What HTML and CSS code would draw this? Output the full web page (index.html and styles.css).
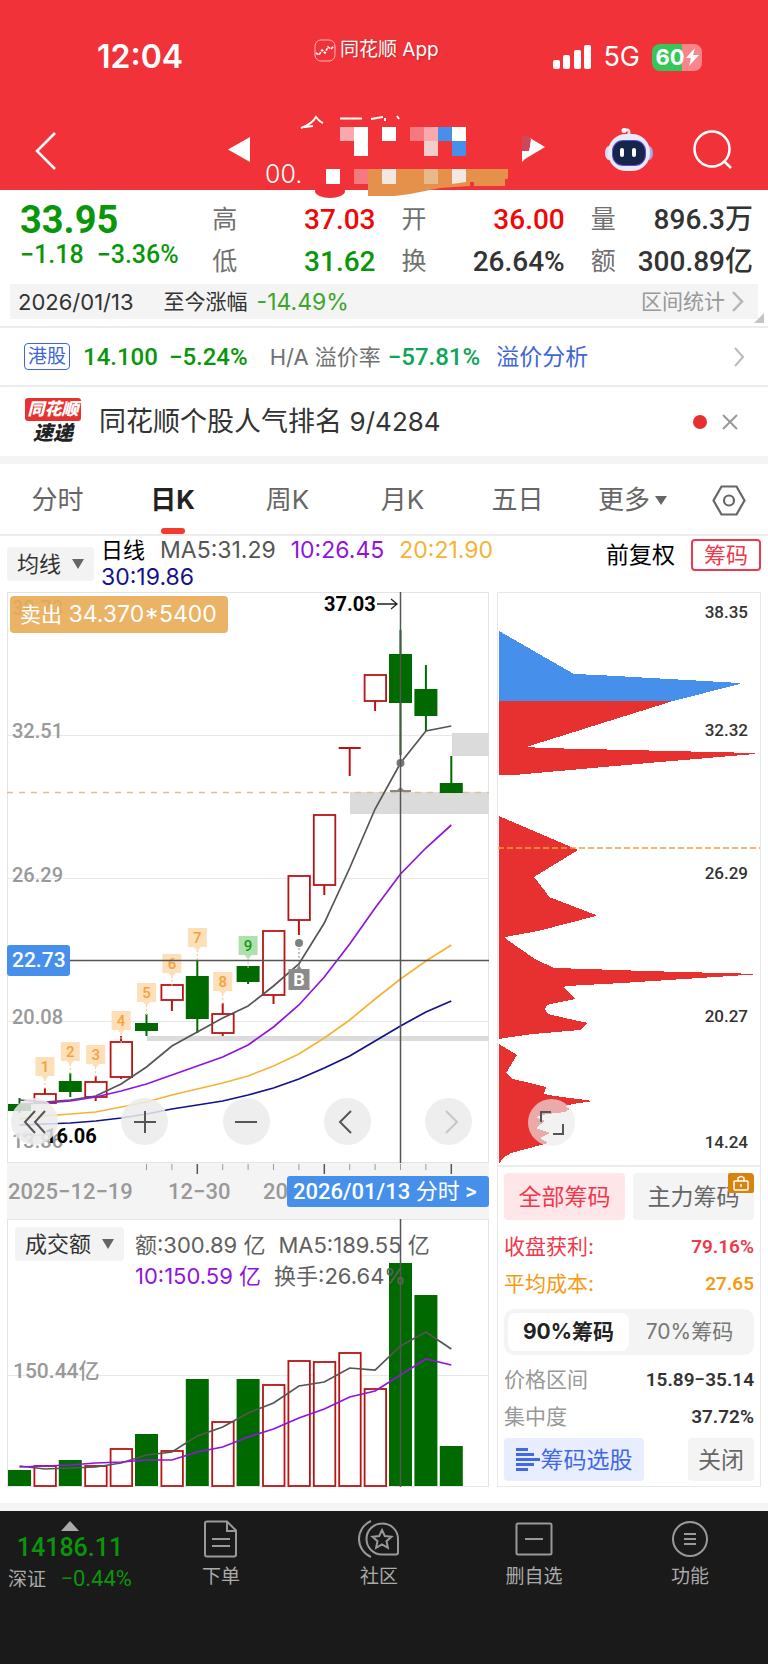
FILE: index.html
```html
<!DOCTYPE html>
<html lang="zh-CN">
<head>
<meta charset="utf-8">
<meta name="viewport" content="width=device-width, initial-scale=1">
<title>同花顺 日K</title>
<link rel="stylesheet" href="styles.css">
</head>
<body>
<header class="top">
  <div class="status">
    <span class="clock">12:04</span>
    <span class="app">
      <svg width="22" height="23" viewBox="0 0 22 23" fill="none" stroke="#fff"><rect x="1" y="1" width="20" height="21" rx="6" stroke="#ffb3b5"/><path d="M2 14l3 2 3-5 3 3 3-6 3 2 3-3" stroke-width="1.6" stroke-dasharray="3 1"/></svg>
      <span>同花顺 App</span>
    </span>
    <span class="signals">
      <svg width="38" height="25" viewBox="0 0 38 25" fill="#fff"><rect y="15" width="7" height="9" rx="2"/><rect x="10" y="10" width="7" height="14" rx="2"/><rect x="21" y="5" width="7" height="19" rx="2"/><rect x="31" width="7" height="24" rx="2"/></svg>
      <span class="net">5G</span>
      <span class="battery">60<svg width="13" height="18" viewBox="0 0 13 18" fill="#fff"><path d="M9 0L0 10h5L3 18l10-11H7z"/></svg></span>
    </span>
  </div>
  <nav class="title-bar">
    <button class="icon-btn" aria-label="返回"><svg width="22" height="40" viewBox="0 0 22 40" fill="none" stroke="#fff" stroke-width="2.5"><path d="M20 2L2 20l18 18"/></svg></button>
    <div class="stock">
      <button class="icon-btn" aria-label="上一只"><svg width="22" height="25" viewBox="0 0 22 25" fill="#fff"><path d="M22 0v25L0 12.500z"/></svg></button>
      <span class="code">00.</span>
      <svg class="mosaic" viewBox="286 106 236 88">
        <g fill="none" stroke="#fff" stroke-width="2"><path d="M301 122q11-4 15-11q4 5 7 6M305 121l8-1M340 112.500h22M371 113l12-2M385 112v3M397 110l2 3"/></g>
        <path fill="#e6914b" d="M368 163h140v10h-3v7h-31v-4h-4v4l-30 2-30 6-15 2h-27z"/>
        <ellipse cx="330" cy="185" rx="15" ry="7" fill="#f03038"/>
        <g fill="#fff"><path d="M354 121h14v29h-14zM382 121h14v14h-14zM452 121h14v14h-14zM326 163h14v15h-14z"/></g>
        <path fill="#f9a8ae" d="M340 121h14v14h-14zM424 121h14v14h-14z"/>
        <path fill="#f57a80" d="M410 121h14v14h-14zM354 163h14v15h-14z"/>
        <path fill="#4690ec" d="M438 121h14v14h-14zM452 135h14v15h-14z"/>
        <path fill="#f5cccc" d="M424 135h14v15h-14z"/>
        <path fill="#f3e8e0" d="M382 163h14v15h-14zM452 163h14v13l-14 2z"/>
        <path fill="#e8b98a" d="M424 163h14v15h-14z"/>
      </svg>
      <button class="icon-btn" aria-label="下一只"><svg width="23" height="26" viewBox="0 0 23 26"><path d="M0 14l8-3V2l15 9L3 23l-3 3z" fill="#fff"/><path d="M0 0h6l3 3-2 12H0z" fill="#cf4658"/></svg></button>
    </div>
    <div class="tools">
      <button class="icon-btn" aria-label="智能助手"><svg width="48" height="44" viewBox="0 0 48 44"><path d="M24 8V4q0-3-4-2" fill="none" stroke="#dfe0f6" stroke-width="3"/><circle cx="19" cy="2.500" r="2.500" fill="#fff"/><ellipse cx="4" cy="25" rx="4" ry="7" fill="#dcdcf2"/><ellipse cx="44" cy="25" rx="4" ry="7" fill="#a9a6ee"/><rect x="3" y="6" width="42" height="37" rx="18" fill="#e9e9fa"/><rect x="7" y="12" width="34" height="26" rx="11" fill="#5b4bd0"/><rect x="8" y="13" width="32" height="24" rx="10" fill="#16264a"/><rect x="15" y="20" width="4" height="9" rx="2" fill="#fff"/><rect x="27" y="20" width="4" height="9" rx="2" fill="#fff"/></svg></button>
      <button class="icon-btn" aria-label="搜索"><svg width="40" height="40" viewBox="0 0 40 40" fill="none" stroke="#fff" stroke-width="2.500"><circle cx="19" cy="19" r="17.500"/><path d="M31 31l7 7"/></svg></button>
    </div>
  </nav>
</header>

<main>
  <section class="quote num">
    <div class="last"><strong>33.95</strong><span>−1.18</span><span>−3.36%</span></div>
    <dl><div><dt>高</dt><dd class="up">37.03</dd></div><div><dt>低</dt><dd class="down">31.62</dd></div></dl>
    <dl><div><dt>开</dt><dd class="up">36.00</dd></div><div><dt>换</dt><dd>26.64%</dd></div></dl>
    <dl><div><dt>量</dt><dd>896.3万</dd></div><div><dt>额</dt><dd>300.89亿</dd></div></dl>
  </section>

  <section class="range-wrap">
    <div class="range">
      <span class="date">2026/01/13</span><span>至今涨幅</span><span class="pct">-14.49%</span>
      <a class="stat" href="#">区间统计<svg width="12" height="21" viewBox="0 0 12 21" fill="none" stroke="#b5b5b5" stroke-width="2.500"><path d="M1 1l9 9.500L1 20"/></svg></a>
    </div>
    <svg class="corner" width="10" height="10" viewBox="0 0 10 10"><path d="M10 0v10H0z" fill="#c4c4c4"/></svg>
  </section>

  <section class="hk">
    <span class="hk-badge">港股</span>
    <b class="num hk-price">14.100</b><b class="num hk-pct">−5.24%</b>
    <span class="ha">H/A 溢价率</span><b class="num ha-pct">−57.81%</b>
    <a href="#" class="analysis">溢价分析</a>
    <svg width="10" height="20" viewBox="0 0 10 20" fill="none" stroke="#bbb" stroke-width="2"><path d="M1 1l8 9-8 9"/></svg>
  </section>

  <section class="news">
    <div class="express"><span class="express-top">同花顺</span><span class="express-bottom">速递</span></div>
    <p>同花顺个股人气排名 <span class="rank">9/4284</span></p>
    <i class="dot"></i>
    <button class="icon-btn" aria-label="关闭提示"><svg width="16" height="16" viewBox="0 0 16 16" stroke="#999" stroke-width="2"><path d="M1 1l14 14M15 1L1 15"/></svg></button>
  </section>

  <nav class="tabs">
    <button>分时</button><button class="active">日K</button><button>周K</button><button>月K</button><button>五日</button>
    <button>更多<svg width="12" height="9" viewBox="0 0 12 9" fill="#666"><path d="M0 0h12L6 9z"/></svg></button>
    <button aria-label="设置"><svg width="34" height="31" viewBox="0 0 34 31" fill="none" stroke="#666" stroke-width="2.200"><path d="M9.500 1.500h15l8 14-8 14h-15l-8-14z"/><circle cx="17" cy="15.500" r="5"/></svg></button>
  </nav>

  <section class="ma-row">
    <label class="picker"><select aria-label="指标"><option>均线</option></select><svg width="12" height="10" viewBox="0 0 12 10" fill="#666"><path d="M0 0h12L6 10z"/></svg></label>
    <div class="legend"><span class="black">日线</span><span>MA5:31.29</span><span class="purple">10:26.45</span><span class="gold">20:21.90</span><span class="navy">30:19.86</span></div>
    <button class="adjust">前复权</button>
    <button class="chip-toggle">筹码</button>
  </section>

  <section class="board">
    <div class="left">
      <div class="kchart">
        <svg id="k" class="plot" viewBox="7 592 482 571"></svg>
        <div class="zoom-bar">
          <button class="round first" aria-label="快退"><svg width="24" height="24" viewBox="0 0 24 24"><path d="M12 1L2 12l10 11M22 1L12 12l10 11"/></svg></button>
          <button class="round" aria-label="放大"><svg width="24" height="24" viewBox="0 0 24 24"><path d="M1 12h22M12 1v22"/></svg></button>
          <button class="round" aria-label="缩小"><svg width="24" height="24" viewBox="0 0 24 24"><path d="M1 12h22"/></svg></button>
          <button class="round" aria-label="前移"><svg width="24" height="24" viewBox="0 0 24 24"><path d="M16 1L5 12l11 11"/></svg></button>
          <button class="round off" aria-label="后移" disabled><svg width="24" height="24" viewBox="0 0 24 24"><path d="M9 1l11 11L9 23"/></svg></button>
        </div>
      </div>
      <svg id="axis" class="plot axis" viewBox="7 1163 482 56"></svg>
      <div class="volume">
        <svg id="v" class="plot" viewBox="7 1219 482 268"></svg>
        <div class="vol-head">
          <label class="picker"><select aria-label="副图指标"><option>成交额</option></select><svg width="12" height="10" viewBox="0 0 12 10" fill="#666"><path d="M0 0h12L6 10z"/></svg></label>
          <div class="vol-legend"><div><span>额:300.89 亿</span><span>MA5:189.55 亿</span></div><div><span class="purple">10:150.59 亿</span><span>换手:26.64%</span></div></div>
        </div>
      </div>
    </div>

    <aside class="chips">
      <div class="profile">
        <svg class="plot" viewBox="498 592 262 572">
          <g shape-rendering="crispEdges">
            <path fill="#4690ec" d="M499 630L574 673L598 674L740 682L740 683L673 700H499z"/>
            <g fill="#e73131">
              <path d="M499 700H673L526 746L543 747L755 752V753L660 761L514 774H499z"/>
              <path d="M499 815L578 849L534 876L545 890L549 896L596 914V915L538 930L505 936L506 938L535 958L554 967L588 968L645 970L760 973L715 976L622 982L567 985L563 986L576 998L560 1001L547 1004L545 1008L548 1013L565 1017L588 1022L580 1029L533 1033L504 1037L499 1038z"/>
              <path d="M499 1043L517 1054L506 1072L513 1078L530 1082L546 1086L544 1093L555 1095L593 1100L573 1103L565 1105L570 1108L565 1111L547 1113L536 1116L545 1120L536 1127L550 1132L540 1137L548 1142L530 1147L511 1152L503 1157L499 1163z"/>
            </g>
          </g>
          <path d="M498 847H760" stroke="#f0a235" stroke-width="1.500" stroke-dasharray="6 3"/>
          <g class="svg-num chip-label" text-anchor="end"><text x="748" y="617">38.35</text><text x="748" y="735">32.32</text><text x="748" y="878">26.29</text><text x="748" y="1021">20.27</text><text x="748" y="1147">14.24</text></g>
        </svg>
        <button class="round expand" aria-label="展开"><svg width="24" height="24" viewBox="0 0 24 24"><path d="M1 11V1h10M23 13v10H13"/></svg></button>
      </div>
      <div class="chip-info">
        <div class="chip-tabs"><button class="on">全部筹码</button><button>主力筹码<span class="lock"><svg width="16" height="16" viewBox="0 0 16 16" fill="none" stroke="#fff" stroke-width="1.500"><rect x="1" y="6" width="14" height="9" rx="1"/><path d="M5 6V3q3-3 6 0v3M8 9v3"/></svg></span></button></div>
        <p class="fact red"><span>收盘获利:</span><b class="num">79.16%</b></p>
        <p class="fact orange"><span>平均成本:</span><b class="num">27.65</b></p>
        <div class="segment"><button class="on">90%筹码</button><button>70%筹码</button></div>
        <p class="fact"><span>价格区间</span><b class="num">15.89−35.14</b></p>
        <p class="fact"><span>集中度</span><b class="num">37.72%</b></p>
        <div class="chip-actions"><button class="pick"><svg width="24" height="24" viewBox="0 0 24 24" fill="#4068e8"><path d="M0 0h12v3H0zM0 5h18v3H0zM0 10h24v3H0zM0 15h18v3H0zM0 20h12v3H0z"/></svg>筹码选股</button><button>关闭</button></div>
      </div>
    </aside>
  </section>
</main>

<nav class="bottom">
  <a class="index" href="#"><svg width="18" height="10" viewBox="0 0 18 10" fill="#aaa"><path d="M9 0l9 10H0z"/></svg><b class="num">14186.11</b><span class="sz">深证 <em class="num">−0.44%</em></span></a>
  <a href="#"><svg width="36" height="38" viewBox="0 0 36 38"><path d="M4 1.500h20l9 9v24q0 2-2 2H4q-2 0-2-2V3.500q0-2 2-2zM24 2v9h9M9 19h18M9 26h18"/></svg>下单</a>
  <a href="#"><svg width="42" height="38" viewBox="0 0 42 38"><path d="M24 3.500a15.500 15.500 0 0 0 0 31h14q2 0 2-2V19a15.500 15.500 0 0 0-16-15.500zM13 1a19.500 19.500 0 0 0 0 36M24 10l2.800 6 6.700.7-5 4.500 1.400 6.600-5.900-3.400-5.900 3.400 1.400-6.600-5-4.500 6.700-.7z"/></svg>社区</a>
  <a href="#"><svg width="38" height="38" viewBox="0 0 38 38"><path d="M3 3.500h32q1.500 0 1.500 1.500v28q0 1.500-1.500 1.500H3q-1.500 0-1.500-1.500V5q0-1.500 1.500-1.500zM10 19h18"/></svg>删自选</a>
  <a href="#"><svg width="38" height="38" viewBox="0 0 38 38"><circle cx="19" cy="19" r="17"/><path d="M13 14h12M13 19h12M13 24h12"/></svg>功能</a>
</nav>
<script src="chart.js"></script>
</body>
</html>
```
FILE: styles.css
```css
* { box-sizing: border-box; }
body {
  margin: 0;
  min-height: 100vh;
  display: flex;
  flex-direction: column;
  background: #fff;
  color: #333;
  font-family: Inter, "Noto Sans CJK SC", sans-serif;
  font-size: 22px;
  line-height: 28px;
}
button, select { font: inherit; color: inherit; border: 0; background: none; padding: 0; margin: 0; }
a { color: inherit; text-decoration: none; }
p, dl, dd { margin: 0; }
svg { display: block; flex: none; }
.num, .svg-num { font-family: Roboto, "Noto Sans CJK SC", sans-serif; }
.icon-btn { display: flex; }
.up { color: #f00808; }
.down { color: #0a960a; }
.purple { color: #9014e0; }
.gold { color: #f5b335; }
.navy { color: #12128c; }
.black { color: #000; }

.top { background: #f13238; color: #fff; height: 190px; }
.status { height: 106px; padding: 8px 66px 0 97px; display: grid; grid-template-columns: 217px auto 1fr; align-items: center; }
.clock { font-size: 32px; font-weight: 600; }
.app { display: flex; gap: 4px; font-size: 19px; padding-bottom: 14px; white-space: nowrap; align-items: center; text-shadow: 1px 1px 2px #a3222688; }
.signals { display: flex; justify-content: flex-end; align-items: center; gap: 12px; }
.net { font-size: 27px; }
.battery { display: flex; align-items: center; justify-content: center; gap: 1px; width: 50px; height: 27px; border-radius: 8px; background: linear-gradient(90deg, #35c759 60%, #f7868a 60%); font-weight: 700; font-size: 22px; }
.title-bar { height: 84px; padding: 0 35px 4px; display: grid; grid-template-columns: 193px 1fr auto; align-items: center; }
.title-bar > .icon-btn { padding-bottom: 8px; }
.stock { display: flex; align-items: center; padding-bottom: 4px; }
.stock .icon-btn { padding-bottom: 8px; }
.code { font-size: 25px; font-weight: 300; width: 36px; margin: 42px 0 0 15px; white-space: nowrap; }
.mosaic { width: 236px; height: 88px; margin: 6px 0 0 -15px; }
.tools { display: flex; gap: 40px; align-items: center; padding-bottom: 10px; }

.quote { display: grid; grid-template-columns: 166fr 163fr 163fr 162fr; column-gap: 26px; padding: 9px 15px 0 20px; height: 94px; font-weight: 500; }
.last { color: #0a960a; font-size: 25px; white-space: nowrap; }
.last strong { display: block; font-size: 38px; line-height: 42px; font-weight: 700; }
.last span + span { margin-left: 13px; }
.quote dl div { display: flex; justify-content: space-between; line-height: 42px; white-space: nowrap; }
.quote dt { color: #707070; font-size: 25px; font-weight: 400; }
.quote dd { font-size: 28px; }

.range-wrap { padding: 0 10px; height: 44px; border-bottom: 2px solid #ececec; position: relative; }
.range { display: flex; align-items: center; height: 35px; padding: 0 14px 0 8px; background: #f4f4f4; font-size: 21px; }
.date { margin-right: 30px; font-size: 22px; }
.pct { color: #3da52b; margin-left: 9px; font-size: 23px; }
.stat { margin-left: auto; display: flex; align-items: center; gap: 7px; color: #999; }
.corner { position: absolute; right: 4px; bottom: 3px; }

.hk { display: flex; align-items: center; height: 59px; padding: 0 24px; border-bottom: 2px solid #ececec; font-size: 23px; white-space: nowrap; }
.hk-badge { border: 1px solid #3f66d8; border-radius: 4px; color: #3f66d8; font-size: 19px; line-height: 25px; padding: 0 3px; }
.hk b { font-weight: 500; font-size: 24px; }
.hk-price { color: #0a960a; margin-left: 13px; }
.hk-pct { color: #0a960a; margin-left: 11px; }
.ha { margin-left: 22px; color: #707070; font-size: 22px; }
.ha-pct { color: #0ea558; margin-left: 7px; }
.analysis { color: #3f66d8; margin: 0 auto 0 16px; }

.news { display: flex; align-items: center; height: 77px; padding: 0 30px 0 24px; border-bottom: 8px solid #f4f4f4; }
.express { width: 58px; display: flex; flex-direction: column; align-items: center; font-weight: 900; font-style: italic; }
.express-top { background: #e73131; color: #fff; font-size: 17px; line-height: 23px; width: 56px; text-align: center; border-radius: 3px; }
.express-bottom { font-size: 20px; line-height: 24px; color: #222; }
.news p { font-size: 27px; margin: 0 auto 0 17px; white-space: nowrap; }
.rank { font-size: 26px; }
.dot { width: 14px; height: 14px; border-radius: 50%; background: #e73131; margin-right: 15px; }

.tabs { display: grid; grid-template-columns: repeat(6, 115fr) 78fr; height: 72px; border-bottom: 2px solid #ececec; color: #666; font-size: 26px; }
.tabs button { display: flex; align-items: center; justify-content: center; gap: 5px; position: relative; white-space: nowrap; padding-top: 2px; }
.tabs .active { color: #222; font-weight: 700; }
.tabs .active::after { content: ""; position: absolute; bottom: 0; width: 24px; height: 6px; border-radius: 3px; background: #f23a30; }

.ma-row { display: flex; height: 56px; padding: 0 7px; align-items: flex-start; }
.picker { display: flex; align-items: center; gap: 10px; background: #f3f3f3; border-radius: 4px; height: 34px; padding: 0 10px; flex: none; }
.picker select { appearance: none; font-size: 22px; height: 34px; }
.ma-row .picker { margin-top: 11px; }
.legend { display: flex; flex-wrap: wrap; column-gap: 15px; margin: 1px 0 0 7px; flex: 1; font-size: 23px; line-height: 27px; color: #555; }
.legend .black { font-size: 22px; }
.legend .navy { flex-basis: 100%; }
.adjust { font-size: 23px; color: #000; line-height: 38px; margin-right: 16px; white-space: nowrap; }
.chip-toggle { border: 2px solid #f0384c; border-radius: 4px; color: #f0384c; width: 70px; height: 32px; line-height: 28px; margin-top: 3px; }

.board { display: grid; grid-template-columns: 482fr 264fr; column-gap: 8px; padding: 0 7px 16px; border-bottom: 8px solid #f4f4f4; }
.plot { width: 100%; height: auto; }
.kchart, .volume, .profile { position: relative; }
.axis { background: #f4f4f4; }
.zoom-bar { position: absolute; left: 4px; right: 17px; bottom: 18px; display: flex; justify-content: space-between; }
.first { margin-right: 9px; }
.round { width: 47px; height: 47px; border-radius: 50%; background: rgba(235, 235, 235, .85); display: flex; align-items: center; justify-content: center; }
.round svg { fill: none; stroke: #555; stroke-width: 2; }
.round.off svg { stroke: #c6c6c6; }
.expand { position: absolute; left: 30px; bottom: 19px; background: rgba(235, 235, 235, .65); }
.vol-head { position: absolute; left: 8px; right: 0; top: 8px; display: flex; }
.vol-legend { margin: 3px 0 0 11px; color: #606060; white-space: nowrap; line-height: 31px; }
.vol-legend div { display: flex; gap: 13px; }
.svg-num text { font-size: 20px; }
.y-label { fill: #999; font-weight: 500; }
.axis .y-label text { font-size: 22px; }
.high { font-weight: 700; fill: #000; }
.chip-label { fill: #333; font-weight: 500; }
.chip-label text { font-size: 17px; }

.chips { border: 1px solid #e8e8e8; display: flex; flex-direction: column; }
.profile { border-bottom: 2px solid #ececec; }
.chip-info { padding: 6px 6px 4px; flex: 1; display: flex; flex-direction: column; }
.chip-info button { white-space: nowrap; }
.chip-tabs { display: grid; grid-template-columns: 1fr 1fr; gap: 8px; margin-bottom: 8px; font-size: 23px; color: #666; }
.chip-tabs button { height: 47px; background: #f4f4f4; border-radius: 4px; position: relative; }
.chip-tabs .on { background: #fee6e9; color: #f0384c; }
.lock { position: absolute; right: 0; top: 0; width: 26px; height: 20px; display: flex; align-items: center; justify-content: center; background: #d88210; border-radius: 2px 4px 2px 2px; }
.fact { display: flex; justify-content: space-between; align-items: center; line-height: 37px; color: #999; font-size: 21px; white-space: nowrap; }
.fact b { font-size: 19px; font-weight: 600; color: #333; }
.fact.red, .red b { color: #f0384c; }
.fact.orange, .orange b { color: #f59a14; }
.segment { display: grid; grid-template-columns: 1fr 1fr; padding: 4px; margin: 7px 0 6px; height: 46px; border-radius: 10px; background: #f4f4f4; font-size: 21px; color: #777; }
.segment .on { background: #fff; border-radius: 8px; color: #222; font-weight: 700; }
.chip-actions { display: flex; justify-content: space-between; margin-top: 3px; font-size: 23px; color: #666; }
.chip-actions button { height: 43px; width: 66px; background: #f4f4f4; border-radius: 4px; }
.chip-actions .pick { width: 140px; background: #e8eeff; color: #4068e8; display: flex; align-items: center; justify-content: center; gap: 1px; }

.bottom { flex: 1; min-height: 151px; background: #1a1a1a; color: #aaa; display: grid; grid-template-columns: 140fr 162fr 154fr 156fr 156fr; font-size: 19px; padding-top: 9px; }
.bottom a { display: flex; flex-direction: column; align-items: center; gap: 5px; }
.bottom a > svg { fill: none; stroke: #999; stroke-width: 2; }
.bottom .index { gap: 1px; padding-top: 1px; }
.bottom .index > svg { fill: #aaa; stroke: none; }
.index b { color: #0a960a; font-size: 25px; line-height: 32px; font-weight: 500; }
.index em { color: #0a960a; font-style: normal; font-size: 22px; margin-left: 9px; }
.sz { white-space: nowrap; }
```
FILE: chart.js
```js
const X = i => 19.5 + i * 25.4;
const RED = '#b81414', GREEN = '#006a00';

// kind, body top, body bottom, wick top, wick bottom
const candles = [
  ['g', 1104, 1111, 1098, 1113], ['r', 1094, 1103, 1088, 1103], ['g', 1081, 1092, 1073, 1097],
  ['r', 1082, 1097, 1076, 1101], ['r', 1042, 1077, 1036, 1079], ['g', 1023, 1031, 1014, 1036],
  ['r', 985, 1000, 985, 1011], ['g', 976, 1019, 960, 1033], ['r', 1014, 1033, 1003, 1036],
  ['g', 966, 982, 966, 984], ['r', 931, 995, 931, 1004], ['r', 876, 920, 876, 935],
  ['r', 815, 885, 815, 895], ['t', 748, 748, 748, 776], ['r', 675, 701, 675, 711],
  ['g', 654, 703, 630, 755], ['g', 689, 716, 665, 731], ['g', 783, 793, 756, 793]
];
const volumes = [['g', 1470], ['r', 1466], ['g', 1460], ['r', 1466], ['r', 1449], ['g', 1434],
  ['r', 1451], ['g', 1379], ['r', 1422], ['g', 1379], ['r', 1385], ['r', 1361], ['r', 1362],
  ['r', 1353], ['r', 1389], ['g', 1263], ['g', 1295], ['g', 1446]];
const tags = [[1, 1057], [2, 1042], [3, 1045], [4, 1011], [5, 983], [6, 954], [7, 928], [8, 972], [9, 936]];

const body = (kind, x, top, bottom) => kind === 'g'
  ? `<rect x="${x - 11.5}" y="${top}" width="23" height="${bottom - top}" fill="${GREEN}"/>`
  : `<rect x="${x - 10.5}" y="${top}" width="21.500" height="${bottom - top}" fill="#fff" stroke="${RED}" stroke-width="1.800"/>`;
const line = (color, ys) =>
  `<polyline fill="none" stroke="${color}" stroke-width="1.700" points="${ys.map((y, i) => X(i) + ',' + y).join(' ')}"/>`;

let k = `<rect x="7.500" y="592.500" width="481" height="570" fill="#fff" stroke="#e4e4e4"/>
<path d="M7 735.500H489M7 878.500H489M7 1021.500H489" stroke="#e8e8e8"/>
<path d="M452 733h37v23h-37zM350 792h139v22H350zM147 1036h342v5H147z" fill="#dbdbdb"/>
<path d="M7 792.500H489" stroke="#dcbf93" stroke-width="1.500" stroke-dasharray="6 6"/>
<g class="svg-num y-label"><text x="12" y="615">38.73</text><text x="12" y="738">32.51</text><text x="12" y="882">26.29</text><text x="12" y="1024">20.08</text><text x="12" y="1148">13.86</text></g>`;
candles.forEach(([kind, top, bottom, high, low], i) => {
  const x = X(i);
  k += `<path d="M${x} ${high}V${low}" stroke="${kind === 'g' ? GREEN : RED}" stroke-width="2"/>`;
  k += kind === 't' ? `<path d="M${x - 11} ${top}h22" stroke="${RED}" stroke-width="2"/>` : body(kind, x, top, bottom);
});
tags.forEach(([n, y]) => {
  const x = X(n), green = n === 9;
  k += `<path d="M${x} ${y + 22}v10" stroke="#f5c07a" stroke-dasharray="2 2"/>
  <path d="M${x - 9.5} ${y}h19v19h-6l-3.500 4-3.500-4h-6z" fill="${green ? '#b0dfb0' : '#fde0b9'}"/>
  <text x="${x}" y="${y + 15}" class="svg-num" font-size="15" font-weight="500" text-anchor="middle" fill="${green ? '#139a13' : '#f5a23c'}">${n}</text>`;
});
k += line('#555', [1100, 1102, 1100, 1096, 1084, 1067, 1046, 1032, 1018, 1006, 986, 964, 923, 868, 809, 763, 731, 726]);
k += line('#9014e0', [1104, 1103, 1101, 1097, 1091, 1084, 1075, 1066, 1057, 1045, 1027, 1005, 977, 944, 908, 874, 848, 825]);
k += line('#f5b335', [1119, 1116, 1114, 1112, 1107, 1102, 1095, 1089, 1083, 1076, 1066, 1054, 1038, 1020, 999, 979, 961, 945]);
k += line('#12128c', [1125, 1124, 1123, 1121, 1118, 1114, 1109, 1105, 1101, 1095, 1088, 1079, 1068, 1056, 1041, 1026, 1012, 1001]);
k += `<circle cx="299" cy="943" r="4" fill="#808080"/><path d="M299 948v18" stroke="#808080" stroke-dasharray="2 2"/>
<path d="M288.500 969h8l2.500-4 2.500 4h8v21h-21z" fill="#8b8b8b"/><text x="299" y="986" class="svg-num" font-size="18" font-weight="700" text-anchor="middle" fill="#fff">B</text>
<circle cx="400.500" cy="763" r="4" fill="#777"/><path d="M390 792v-2h7l3.500-3 3.500 3h7v2z" fill="#888"/>
<path d="M400.500 592V1163M69 960.500H489" stroke="#555" stroke-width="1.500"/>
<rect x="10" y="596" width="218" height="37" rx="4" fill="#e9ab55" fill-opacity=".9"/>
<text x="20" y="622" font-size="23" fill="#fff"><tspan font-size="21">卖出</tspan> 34.370*5400</text>
<g class="svg-num high"><text x="324" y="611">37.03</text><text x="45" y="1143">16.06</text></g>
<path d="M377 604h20M391 599l6 5-6 5" fill="none" stroke="#222" stroke-width="1.300"/>
<path d="M44 1135H22M27 1131l-5 4 5 4" fill="none" stroke="#999"/>
<rect x="7" y="945" width="63" height="31" rx="3" fill="#4690ec"/><text x="12" y="967" class="svg-num" font-size="21" font-weight="500" fill="#fff">22.73</text>`;
document.getElementById('k').innerHTML = k;

let a = '<g stroke="#999">';
for (let i = 5; i < 18; i++) {
  const major = i === 7 || i === 12 || i === 17;
  a += `<path d="M${X(i)} 1164v${major ? 10 : 6}" ${major ? 'stroke="#555" stroke-width="1.500"' : ''}/>`;
}
a += `</g><g class="svg-num y-label"><text x="8" y="1199">2025−12−19</text><text x="168" y="1199">12−30</text><text x="263" y="1199">20</text></g>
<rect x="287" y="1176" width="202" height="31" rx="3" fill="#4690ec"/>
<text x="293" y="1199" class="svg-num" font-size="22" fill="#fff" font-weight="500">2026/01/13 <tspan font-weight="400">分时</tspan> &gt;</text>`;
document.getElementById('axis').innerHTML = a;

let v = `<rect x="7.500" y="1219.500" width="481" height="267" fill="#fff" stroke="#e4e4e4"/>
<path d="M7 1375.500H489" stroke="#e8e8e8"/><text x="13" y="1378" class="svg-num y-label" font-size="21">150.44亿</text>`;
volumes.forEach(([kind, top], i) => { v += body(kind, X(i), top, 1486); });
v += line('#555', [1466, 1469, 1468, 1467, 1463, 1455, 1452, 1436, 1427, 1413, 1403, 1386, 1382, 1368, 1370, 1346, 1332, 1349]);
v += line('#9014e0', [1467, 1466, 1465, 1463, 1462, 1460, 1460, 1452, 1447, 1437, 1429, 1418, 1409, 1397, 1391, 1375, 1359, 1365]);
v += '<path d="M400.500 1219V1487" stroke="#555" stroke-width="1.500"/>';
document.getElementById('v').innerHTML = v;
```
